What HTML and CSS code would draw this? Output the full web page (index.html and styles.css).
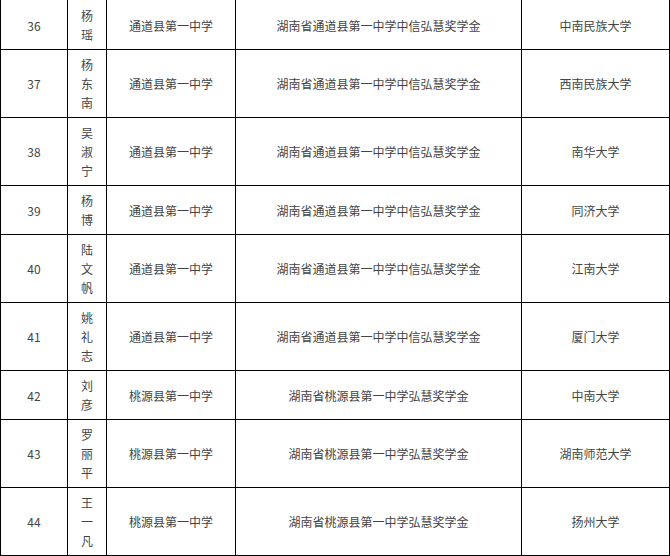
FILE: index.html
```html
<!DOCTYPE html>
<html lang="zh-CN">
<head>
<meta charset="utf-8">
<link rel="stylesheet" href="styles.css">
</head>
<body>
<table class="list">
  <colgroup>
    <col class="c-no">
    <col class="c-name">
    <col class="c-school">
    <col class="c-award">
    <col class="c-univ">
  </colgroup>
  <tbody>
    <tr><td>36</td><td class="name">杨瑶</td><td>通道县第一中学</td><td>湖南省通道县第一中学中信弘慧奖学金</td><td>中南民族大学</td></tr>
    <tr><td>37</td><td class="name">杨东南</td><td>通道县第一中学</td><td>湖南省通道县第一中学中信弘慧奖学金</td><td>西南民族大学</td></tr>
    <tr><td>38</td><td class="name">吴淑宁</td><td>通道县第一中学</td><td>湖南省通道县第一中学中信弘慧奖学金</td><td>南华大学</td></tr>
    <tr><td>39</td><td class="name">杨博</td><td>通道县第一中学</td><td>湖南省通道县第一中学中信弘慧奖学金</td><td>同济大学</td></tr>
    <tr><td>40</td><td class="name">陆文帆</td><td>通道县第一中学</td><td>湖南省通道县第一中学中信弘慧奖学金</td><td>江南大学</td></tr>
    <tr><td>41</td><td class="name">姚礼志</td><td>通道县第一中学</td><td>湖南省通道县第一中学中信弘慧奖学金</td><td>厦门大学</td></tr>
    <tr><td>42</td><td class="name">刘彦</td><td>桃源县第一中学</td><td>湖南省桃源县第一中学弘慧奖学金</td><td>中南大学</td></tr>
    <tr><td>43</td><td class="name">罗丽平</td><td>桃源县第一中学</td><td>湖南省桃源县第一中学弘慧奖学金</td><td>湖南师范大学</td></tr>
    <tr><td>44</td><td class="name">王一凡</td><td>桃源县第一中学</td><td>湖南省桃源县第一中学弘慧奖学金</td><td>扬州大学</td></tr>
  </tbody>
</table>
</body>
</html>
```
FILE: styles.css
```css
html, body {
  margin: 0;
  padding: 0;
  background: #fff;
}

.list {
  border-collapse: collapse;
  table-layout: fixed;
  width: 669px;
  font-family: "Noto Sans CJK SC", "Microsoft YaHei", sans-serif;
  font-size: 12px;
  line-height: 19px;
  color: #444;
}

.c-no { width: 67px; }
.c-name { width: 39px; }
.c-school { width: 129px; }
.c-award { width: 286px; }
.c-univ { width: 148px; }

.list td {
  border: 1px solid #000;
  padding: 5px 8px;
  text-align: center;
  vertical-align: middle;
}

.list tr:first-child td {
  border-top: none;
  padding-top: 6px;
}

.list td.name {
  word-break: break-all;
}
```
